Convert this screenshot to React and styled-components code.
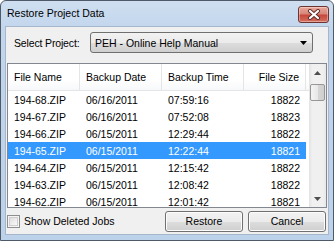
import React from 'react';
import styled, { createGlobalStyle } from 'styled-components';

const rows = [
  { name: '194-68.ZIP', date: '06/16/2011', time: '07:59:16', size: '18822' },
  { name: '194-67.ZIP', date: '06/16/2011', time: '07:52:08', size: '18823' },
  { name: '194-66.ZIP', date: '06/15/2011', time: '12:29:44', size: '18822' },
  { name: '194-65.ZIP', date: '06/15/2011', time: '12:22:44', size: '18821', selected: true },
  { name: '194-64.ZIP', date: '06/15/2011', time: '12:15:42', size: '18822' },
  { name: '194-63.ZIP', date: '06/15/2011', time: '12:08:42', size: '18822' },
  { name: '194-62.ZIP', date: '06/15/2011', time: '12:01:42', size: '18821' },
];

const App = () => {
  return (
    <>
      <GlobalStyle />
      <Frame>
        <TitleBar>
          <Title>Restore Project Data</Title>
          <CloseButton>
            <svg width="14" height="11" viewBox="0 0 14 11">
              <path d="M3 2 L11 9 M11 2 L3 9" stroke="#5a2a26" strokeWidth="4" strokeLinecap="round" />
              <path d="M3 2 L11 9 M11 2 L3 9" stroke="#fff" strokeWidth="2.2" strokeLinecap="round" />
            </svg>
          </CloseButton>
        </TitleBar>

        <Client>
          <ProjectRow>
            <Label>Select Project:</Label>
            <Combo>
              <span>PEH - Online Help Manual</span>
              <svg width="7" height="4" viewBox="0 0 7 4">
                <path d="M0 0 H7 L3.5 4 Z" fill="#000" />
              </svg>
            </Combo>
          </ProjectRow>

          <ListView>
            <ListMain>
              <Header>
                <HeaderCell>File Name</HeaderCell>
                <HeaderCell>Backup Date</HeaderCell>
                <HeaderCell>Backup Time</HeaderCell>
                <HeaderCell $right>File Size</HeaderCell>
                <HeaderFill />
              </Header>
              {rows.map((r) => (
                <Row key={r.name} $selected={r.selected}>
                  <Cell>{r.name}</Cell>
                  <Cell>{r.date}</Cell>
                  <Cell>{r.time}</Cell>
                  <Cell $right>{r.size}</Cell>
                </Row>
              ))}
            </ListMain>
            <ScrollBar>
              <ScrollArrow>
                <svg width="7" height="4" viewBox="0 0 7 4">
                  <path d="M0 4 H7 L3.5 0 Z" fill="#4d4d4d" />
                </svg>
              </ScrollArrow>
              <Thumb />
              <Track />
              <ScrollArrow>
                <svg width="7" height="4" viewBox="0 0 7 4">
                  <path d="M0 0 H7 L3.5 4 Z" fill="#4d4d4d" />
                </svg>
              </ScrollArrow>
            </ScrollBar>
          </ListView>

          <Footer>
            <CheckLabel>
              <CheckBox />
              Show Deleted Jobs
            </CheckLabel>
            <Buttons>
              <Button>Restore</Button>
              <Button>Cancel</Button>
            </Buttons>
          </Footer>
        </Client>
      </Frame>
    </>
  );
};

export default App;

const GlobalStyle = createGlobalStyle`
  body {
    margin: 0;
    background: #fff;
    font-family: 'Liberation Sans', Arial, sans-serif;
  }
`;

const Frame = styled.div`
  box-sizing: border-box;
  width: 334px;
  height: 241px;
  border: 1px solid #4f5a68;
  border-radius: 6px 6px 0 0;
  background: linear-gradient(#cfdff1, #c1d5ec 30px, #bcd1ea);
  padding: 0 4px 5px 4px;
  display: flex;
  flex-direction: column;
`;

const TitleBar = styled.div`
  height: 25px;
  display: flex;
  align-items: center;
  justify-content: space-between;
  padding: 0 0 0 2px;
`;

const Title = styled.span`
  font-size: 10.5px;
  color: #000;
  margin-top: -1px;
`;

const CloseButton = styled.div`
  width: 29px;
  height: 15px;
  margin-top: 1px;
  border: 1px solid #6e3530;
  border-radius: 3px;
  background: linear-gradient(#e9a99b, #d7867a 45%, #c6483b 55%, #d5705f);
  display: flex;
  align-items: center;
  justify-content: center;
  box-shadow: inset 0 0 0 1px rgba(255, 255, 255, 0.35);
`;

const Client = styled.div`
  flex: 1;
  background: #f0f0f0;
  border: 1px solid #a6b6cb;
  padding: 5px 0 0 1px;
  display: flex;
  flex-direction: column;
`;

const ProjectRow = styled.div`
  display: flex;
  align-items: center;
  height: 21px;
  padding-left: 7px;
  gap: 6px;
`;

const Label = styled.span`
  font-size: 10.5px;
  letter-spacing: -0.15px;
  color: #000;
  width: 70px;
`;

const Combo = styled.div`
  width: 223px;
  height: 21px;
  box-sizing: border-box;
  border: 1px solid #707070;
  border-radius: 3px;
  background: linear-gradient(#f2f2f2, #ebebeb 50%, #dddddd 51%, #cfcfcf);
  display: flex;
  align-items: center;
  justify-content: space-between;
  padding: 0 5px 0 4px;
  font-size: 10.5px;
  color: #000;
`;

const ListView = styled.div`
  margin-top: 10px;
  width: 320px;
  height: 145px;
  box-sizing: border-box;
  border: 1px solid #828790;
  background: #fff;
  display: flex;
  overflow: hidden;
`;

const ListMain = styled.div`
  flex: 1;
  overflow: hidden;
`;

const Header = styled.div`
  display: grid;
  grid-template-columns: 72px 82px 82px 62px 1fr;
  height: 26px;
  border-bottom: 1px solid #e5e5e5;
  background: linear-gradient(#ffffff, #ffffff 60%, #f7f8fa);
`;

const HeaderCell = styled.div`
  display: flex;
  align-items: center;
  justify-content: ${(p) => (p.$right ? 'flex-end' : 'flex-start')};
  padding: 0 6px;
  border-right: 1px solid #e5e5e5;
  font-size: 10.5px;
  color: #000;
`;

const HeaderFill = styled.div``;

const Row = styled.div`
  display: grid;
  grid-template-columns: 72px 82px 82px 62px;
  width: 298px;
  height: 17px;
  align-items: center;
  background: ${(p) => (p.$selected ? '#3399ff' : 'transparent')};
  color: ${(p) => (p.$selected ? '#fff' : '#000')};
`;

const Cell = styled.div`
  font-size: 10.5px;
  padding: 0 6px;
  text-align: ${(p) => (p.$right ? 'right' : 'left')};
  white-space: nowrap;
`;

const ScrollBar = styled.div`
  width: 17px;
  display: flex;
  flex-direction: column;
  background: linear-gradient(90deg, #e3e3e3, #f0f0f0 20%, #f0f0f0 80%, #e8e8e8);
`;

const ScrollArrow = styled.div`
  height: 17px;
  display: flex;
  align-items: center;
  justify-content: center;
`;

const Thumb = styled.div`
  height: 15px;
  margin: 3px 1px 0 1px;
  border: 1px solid #979797;
  border-radius: 2px;
  background: linear-gradient(90deg, #f3f3f3, #e8e8e8 50%, #d6d6d6 51%, #cfcfcf);
`;

const Track = styled.div`
  flex: 1;
`;

const Footer = styled.div`
  flex: 1;
  display: flex;
  align-items: center;
  justify-content: space-between;
  padding: 0 2px 0 0;
`;

const CheckLabel = styled.label`
  display: flex;
  align-items: center;
  gap: 4px;
  font-size: 10.5px;
  color: #000;
`;

const CheckBox = styled.span`
  width: 13px;
  height: 13px;
  box-sizing: border-box;
  border: 1px solid #8e8f8f;
  background: linear-gradient(135deg, #d6d6d6, #f4f4f4 70%, #ffffff);
  box-shadow: inset 0 0 0 1px #f4f4f4, inset 0 0 0 2px #cfcfcf;
`;

const Buttons = styled.div`
  display: flex;
  gap: 5px;
`;

const Button = styled.button`
  width: 78px;
  height: 21px;
  border: 1px solid #707070;
  border-radius: 3px;
  background: linear-gradient(#f2f2f2, #ebebeb 50%, #dddddd 51%, #cfcfcf);
  box-shadow: inset 0 0 0 1px #fcfcfc;
  font-family: 'Liberation Sans', Arial, sans-serif;
  font-size: 10.5px;
  color: #000;
  padding: 0;
`;
